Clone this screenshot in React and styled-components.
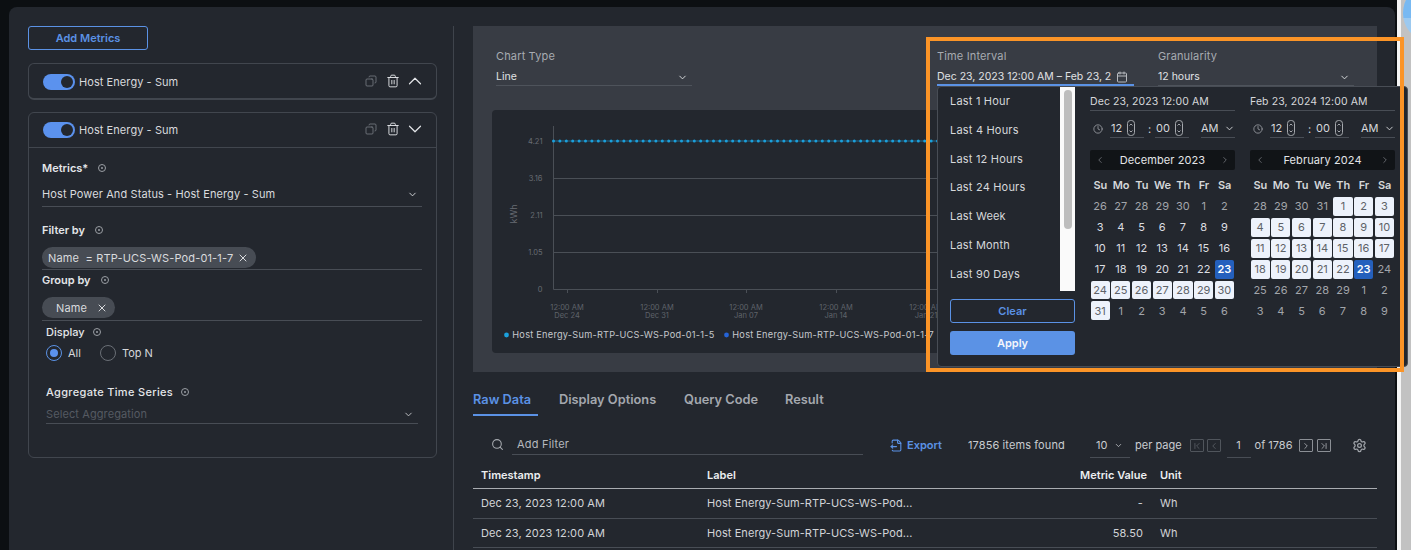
import React from 'react';
import styled, { createGlobalStyle } from 'styled-components';
import { ChevronUp, ChevronDown, ChevronLeft, ChevronRight, ChevronFirst, ChevronLast, Calendar, Clock, Search, X, Settings, FileOutput, Trash2, Copy } from 'lucide-react';

const Global = createGlobalStyle`
  html, body { margin: 0; padding: 0; height: 550px; overflow: hidden; background: #0c0f12; }
  * { box-sizing: border-box; }
  body { font-family: Inter, "Liberation Sans", sans-serif; font-size: 11px; color: #e3e5e8; }
`;

const Page = styled.div`position: relative; width: 1411px; height: 550px; display: flex; overflow: hidden; padding: 7px 0 0 9px;`;
const Card = styled.div`width: 1386px; height: 543px; background: #23272e; border-radius: 8px 8px 0 0; display: flex;`;
const ScrollRail = styled.div`width: 14px; margin-left: 2px; margin-top: -7px; background: #c2c2c2; border-left: 4px solid #f4f4f4;`;
const Bubble = styled.div`position: absolute; left: 1403px; top: -12px; width: 40px; height: 50px; border-radius: 50%; background: linear-gradient(#78b9f2 60%, #9cc9ef 60%);`;

const Left = styled.aside`width: 445px; flex: none; margin-top: 19px; padding: 0 16px 0 19px; border-right: 1px solid #3f444c;`;
const AddButton = styled.button`display: block; width: 120px; height: 24px; background: transparent; border: 1px solid #5b92e5; border-radius: 3px; color: #5b92e5; font: 600 11px Inter, sans-serif;`;
const Panel = styled.section`margin-top: ${p => p.$gap}px; border: 1px solid #41464e; border-radius: 6px; ${p => p.$collapsed && 'border-bottom-width: 2px; height: 37px;'} ${p => p.$tall && 'height: 346px;'}`;
const PanelHead = styled.div`height: ${p => p.$h}px; display: flex; align-items: center; padding: 0 10px 0 14px; ${p => p.$line && 'border-bottom: 1px solid #41464e;'}`;
const Toggle = styled.span`width: 32px; height: 16px; border-radius: 8px; background: #5b92ee; flex: none; display: flex; justify-content: flex-end; align-items: center; padding-right: 2px; &::after { content: ''; width: 12px; height: 12px; border-radius: 50%; background: #23272e; }`;
const PanelTitle = styled.span`margin-left: 4px; font-size: 11px; letter-spacing: .07px; color: #d8dadd; flex: 1;`;
const HeadIcons = styled.span`display: flex; align-items: center; margin-top: -2px;`;
const CopyGlyph = styled(Copy)`color: #7e838b; transform: scaleX(-1);`;
const TrashGlyph = styled(Trash2)`color: #e3e5e8; margin-left: 9px;`;
const ChevGlyph = styled.span`display: flex; margin-left: 4px; color: #e3e5e8;`;
const PanelBody = styled.div`padding: 13px 14px 0 13px;`;
const FieldLabel = styled.div`display: flex; align-items: center; gap: ${p => p.$gap || 10}px; font-weight: ${p => p.$light ? 500 : 600}; font-size: 11px; line-height: 14px; letter-spacing: ${p => p.$ls || 0}px; color: #e4e6e9;`;
const InfoDot = styled.span`width: 8px; height: 8px; border-radius: 50%; border: 1px solid #9a9ea4; display: grid; place-items: center; &::after { content: ''; width: 2px; height: 2px; border-radius: 50%; background: #9a9ea4; }`;
const SelectRow = styled.div`height: ${p => p.$h}px; margin-top: ${p => p.$mt}px; display: flex; align-items: center; justify-content: space-between; border-bottom: 1px solid #484d55; padding-right: 4px; color: #d9dbde; letter-spacing: .1px; font-size: 11px; ${p => p.$muted && 'color: #555a62; svg { color: #c5c7ca; }'}`;
const PillRow = styled.div`height: ${p => p.$h}px; margin-top: 10px; border-bottom: 1px solid #484d55; display: flex; align-items: flex-start;`;
const Pill = styled.span`height: 21px; border-radius: 11px; background: #474c54; display: inline-flex; align-items: center; gap: ${p => p.$gap}px; padding: 0 7px 0 ${p => p.$pl}px; color: #d9dbde; font-size: 11px; letter-spacing: .15px; white-space: pre;`;
const Section = styled.div`margin-top: ${p => p.$mt}px; padding: ${p => p.$inset ? '0 4px' : '0'};`;
const RadioRow = styled.div`display: flex; align-items: center; margin-top: 6px; height: 16px; font-size: 11px; color: #d6d8db;`;
const Radio = styled.span`width: 16px; height: 16px; border-radius: 50%; border: 1px solid ${p => p.$on ? '#5b92e5' : '#6a6f76'}; display: grid; place-items: center; margin-right: 6px; ${p => p.$on && '&::after { content: ""; width: 8px; height: 8px; border-radius: 50%; background: #5b92ee; }'}`;
const RadioText = styled.span`margin-right: ${p => p.$mr}px;`;

const Right = styled.main`flex: 1; padding: 19px 18px 0 19px; min-width: 0;`;
const ChartPanel = styled.section`height: 346px; background: #383c44; padding: 23px 0 0 19px;`;
const Controls = styled.div`display: flex; height: 61px;`;
const Control = styled.div`width: ${p => p.$w}px; margin-left: ${p => p.$ml || 0}px; flex: none; color: #a7abb1; line-height: 14px; letter-spacing: .15px;`;
const ControlValue = styled.div`height: 19px; margin-top: 4px; padding-top: 2px; display: flex; align-items: center; justify-content: space-between; padding-right: ${p => p.$active ? 6 : 4}px; border-bottom: ${p => p.$active ? '2px solid #5b92e5' : '1px solid #4e535b'}; color: #e0e2e5; font-size: 10.5px; letter-spacing: 0; white-space: nowrap;`;
const CalendarGlyph = styled(Calendar)`flex: none; color: #b7babf;`;
const ChartCard = styled.div`width: 877px; height: 243px; border-radius: 4px; background: #23272e; overflow: hidden;`;
const Tabs = styled.nav`display: flex; height: 37px; gap: 21px; margin-top: 7px;`;
const Tab = styled.span`padding: 13px 0 0 0; width: ${p => p.$w}px; font-size: 12.8px; font-weight: 600; white-space: nowrap; color: ${p => p.$on ? '#5b92e5' : '#a4a8ae'}; ${p => p.$on && 'border-bottom: 2px solid #5b92e5;'}`;
const Toolbar = styled.div`height: 45px; display: flex; align-items: flex-start; padding-top: 19px; color: #c9ccd0;`;
const SearchGlyph = styled(Search)`margin: 3px 0 0 18px; color: #a5a9ae; flex: none;`;
const SearchBox = styled.div`width: 351px; margin-left: 8px; height: 20px; border-bottom: 1px solid #484d55; padding: 2px 0 0 5px; color: #b5b8bd; letter-spacing: .2px;`;
const Export = styled.span`margin-left: 27px; width: 78px; display: flex; align-items: center; gap: 4px; color: #5b92e5; font-weight: 600; height: 20px;`;
const Found = styled.span`width: 122px; line-height: 20px; letter-spacing: .1px;`;
const PerPage = styled.span`width: 40px; height: 28px; padding: 3px 0 0 6px; margin-top: -5px; border-bottom: 1px solid #484d55; display: flex; align-items: center; gap: 7px;`;
const PagerText = styled.span`line-height: 20px; margin-left: ${p => p.$ml}px;`;
const PageBtn = styled.span`width: 14px; height: 13px; margin-left: ${p => p.$ml}px; margin-top: 4px; border: 1.5px solid ${p => p.$dim ? '#50555c' : '#8b8f95'}; border-radius: 1px; display: grid; place-items: center; color: ${p => p.$dim ? '#5a5f66' : '#a9adb2'};`;
const PageInput = styled.span`width: 24px; height: 28px; margin: -5px 0 0 6px; padding-top: 3px; border-bottom: 1px solid #484d55; display: grid; place-items: center;`;
const Gear = styled.span`margin-left: 21px; margin-top: 3px; color: #a0a4aa;`;
const Table = styled.div`color: #d2d4d8; letter-spacing: .08px;`;
const Row = styled.div`display: grid; grid-template-columns: 226px 260px 176px 1fr; align-items: center; padding-left: 8px; height: ${p => p.$head ? 28 : 29.5}px; border-bottom: 1px solid ${p => p.$head ? '#a9acb1' : '#484d55'}; ${p => p.$head && 'font-weight: 600; color: #eceef0; letter-spacing: 0;'}`;
const NumCell = styled.span`display: block; text-align: right; margin-right: ${p => p.$head ? -4 : 0}px;`;
const UnitCell = styled.span`padding-left: 17px;`;

const Highlight = styled.div`position: absolute; left: 926px; top: 37px; width: 478px; height: 335px; border: 4px solid #fb9427; pointer-events: none; z-index: 5;`;
const Popover = styled.div`position: absolute; left: 937px; top: 86px; width: 471px; height: 281px; background: #23272e; border: 1px solid #484d55; border-radius: 4px; display: flex; z-index: 3;`;
const PresetCol = styled.div`width: 137px; flex: none; display: flex; flex-direction: column;`;
const PresetTop = styled.div`height: 204px; display: flex;`;
const PresetList = styled.div`width: 122px; padding: 0 0 0 12px; color: #d6d8db; letter-spacing: .2px;`;
const Preset = styled.div`height: 28.8px; line-height: 29px;`;
const PresetScroll = styled.div`width: 15px; background: #fafafa; display: flex; justify-content: center; padding-top: 3px;`;
const Thumb = styled.div`width: 8px; height: 139px; border-radius: 4px; background: #bdbdbd;`;
const Ghost = styled.button`display: block; margin: 8px 0 0 12px; width: 125px; height: 24px; border: 1px solid #5b92e5; border-radius: 3px; background: transparent; color: #5b92e5; font: 600 11px Inter, sans-serif;`;
const Primary = styled.button`display: block; margin: 8px 0 0 12px; width: 125px; height: 24px; border: 0; border-radius: 3px; background: #5b92e5; color: #f3f6fb; font: 600 11px Inter, sans-serif;`;
const CalCol = styled.div`width: 145px; flex: none; margin-left: ${p => p.$ml}px;`;
const DateField = styled.div`height: 24px; padding-top: 8px; line-height: 14px; border-bottom: 1px solid #484d55; color: #d6d8db; font-size: 10.5px; letter-spacing: .1px; white-space: nowrap;`;
const TimeRow = styled.div`height: 19px; margin-top: 8px; display: flex; align-items: center; color: #d6d8db;`;
const TimeClock = styled.span`width: 20px; padding-left: 3px; color: #9a9ea4; display: flex;`;
const TimeBox = styled.span`width: 34px; height: 19px; border-bottom: 1px solid #484d55; display: flex; align-items: center; gap: 5px; padding-left: 1px;`;
const Colon = styled.span`width: 11px; text-align: center;`;
const AmPm = styled.span`margin-left: 12px; width: 34px; height: 19px; border-bottom: 1px solid #484d55; display: flex; align-items: center; justify-content: space-between;`;
const MonthBar = styled.div`height: 20px; margin-top: 12px; border-radius: 2px; background: #111417; display: flex; align-items: center; justify-content: space-between; padding: 0 5px; color: #e3e5e8; letter-spacing: .1px; svg { color: #70747a; }`;
const DayGrid = styled.div`display: grid; grid-template-columns: repeat(7, 1fr); grid-template-rows: 22px repeat(6, 20.9px); margin-top: 4px;`;
const Dow = styled.span`display: grid; place-items: center; font-weight: 600; color: #d5d7da;`;
const Day = styled.span`display: grid; place-items: center; margin: 1px 1px 1px 0.5px; border-radius: 2px; background: ${p => p.$v === 'sel' ? '#2460bd' : p.$v === 'range' ? '#edf2fb' : 'transparent'}; color: ${p => p.$v === 'sel' ? '#fff' : p.$v === 'range' ? '#5e6268' : p.$v === 'out' ? '#a2a5aa' : '#dcdee1'}; font-weight: ${p => p.$v === 'sel' ? 600 : 400};`;

const range = (a, b) => Array.from({ length: b - a + 1 }, (_, i) => a + i);
const dec = [
  ...[26,27,28,29,30].map(n => [n,'out']), [1,'out'], [2,'out'],
  ...range(3,22).map(n => [n,'cur']), [23,'sel'],
  ...range(24,31).map(n => [n,'range']),
  ...range(1,6).map(n => [n,'out']),
];
const feb = [
  ...[28,29,30,31].map(n => [n,'out']),
  ...range(1,22).map(n => [n,'range']), [23,'sel'],
  [24,'out'], ...[25,26,27,28,29].map(n => [n,'out']), [1,'out'], [2,'out'],
  ...range(3,9).map(n => [n,'out']),
];

const StepperSvg = styled.svg`flex: none;`;
const Stepper = () => (
  <StepperSvg width="8" height="16" viewBox="0 0 8 16" fill="none" stroke="#a5a8ad" strokeWidth="1">
    <rect x=".5" y=".5" width="7" height="15" rx="3" />
    <path d="M2.5 5.5 4 4l1.5 1.5M2.5 10.5 4 12l1.5-1.5" />
  </StepperSvg>
);

function RangeCalendar({ ml, start, month, days }) {
  return (
    <CalCol $ml={ml}>
      <DateField>{start}</DateField>
      <TimeRow>
        <TimeClock><Clock size={10} /></TimeClock>
        <TimeBox>12<Stepper /></TimeBox>
        <Colon>:</Colon>
        <TimeBox>00<Stepper /></TimeBox>
        <AmPm>AM <ChevronDown size={11} /></AmPm>
      </TimeRow>
      <MonthBar><ChevronLeft size={10} />{month}<ChevronRight size={10} /></MonthBar>
      <DayGrid>
        {['Su','Mo','Tu','We','Th','Fr','Sa'].map(d => <Dow key={d}>{d}</Dow>)}
        {days.map(([n, v], i) => <Day key={i} $v={v}>{n}</Day>)}
      </DayGrid>
    </CalCol>
  );
}

function PanelHeader({ open, line, h }) {
  const Chev = open ? ChevronDown : ChevronUp;
  return (
    <PanelHead $line={line} $h={h}>
      <Toggle />
      <PanelTitle>Host Energy - Sum</PanelTitle>
      <HeadIcons>
        <CopyGlyph size={12} strokeWidth={1.5} />
        <TrashGlyph size={14} strokeWidth={1.6} />
        <ChevGlyph><Chev size={22} strokeWidth={1.3} /></ChevGlyph>
      </HeadIcons>
    </PanelHead>
  );
}

function ChartDrawing() {
  const ticks = [['Dec 24', 75], ['Dec 31', 165], ['Jan 07', 254], ['Jan 14', 344], ['Jan 21', 434]];
  return (
    <svg width="877" height="243" viewBox="0 0 877 243" fontFamily="Inter, sans-serif">
      <path d="M61.5 16V179.5H877" fill="none" stroke="#4a4f56" />
      {[68, 105, 142].map(y => <path key={y} d={`M61 ${y + 0.5}H877`} stroke="#4a4f56" />)}
      {ticks.map(([d, x]) => <path key={d} d={`M${x + .5} 179v4`} stroke="#4a4f56" />)}
      <path d="M61 31H450" stroke="#1ba0dc" strokeWidth=".6" />
      {range(0, 61).map(i => <circle key={i} cx={61.5 + i * 6.4} cy="31" r="1.5" fill="#1ba0dc" />)}
      {[['4.21', 34], ['3.16', 71], ['2.11', 108], ['1.05', 145], ['0', 182]].map(([t, y]) => (
        <text key={t} x="50.5" y={y} textAnchor="end" fontSize="7.5" fill="#686c73">{t}</text>
      ))}
      <text fontSize="9" fill="#686c73" transform="translate(25 104) rotate(-90)" textAnchor="middle">kWh</text>
      {ticks.map(([d, x]) => (
        <g key={d} fontSize="7.5" fill="#5f636a" textAnchor="middle">
          <text x={x} y="200">12:00 AM</text>
          <text x={x} y="208">{d}</text>
        </g>
      ))}
      <circle cx="14.5" cy="225" r="2.4" fill="#1ba0dc" />
      <text x="20.3" y="228" fontSize="9.2" letterSpacing=".25" fill="#c6c9cd">Host Energy-Sum-RTP-UCS-WS-Pod-01-1-5</text>
      <circle cx="234.5" cy="225" r="2.4" fill="#2563d6" />
      <text x="240.3" y="228" fontSize="9.2" letterSpacing=".25" fill="#c6c9cd">Host Energy-Sum-RTP-UCS-WS-Pod-01-1-7</text>
    </svg>
  );
}

export default function App() {
  return (
    <Page>
      <Global />
      <Card>
        <Left>
          <AddButton>Add Metrics</AddButton>
          <Panel $gap={13} $collapsed><PanelHeader h={35} /></Panel>
          <Panel $gap={12} $tall>
            <PanelHeader open line h={35} />
            <PanelBody>
              <FieldLabel>Metrics* <InfoDot /></FieldLabel>
              <SelectRow $h={25} $mt={7}>Host Power And Status - Host Energy - Sum <ChevronDown size={11} /></SelectRow>
              <Section $mt={16}><FieldLabel>Filter by <InfoDot /></FieldLabel></Section>
              <PillRow $h={23}><Pill $pl={6} $gap={0}>{'Name  = RTP-UCS-WS-Pod-01-1-7'} <X size={12} /></Pill></PillRow>
              <Section $mt={3}><FieldLabel>Group by <InfoDot /></FieldLabel></Section>
              <PillRow $h={24}><Pill $pl={14} $gap={6}>Name <X size={12} /></Pill></PillRow>
              <Section $mt={4} $inset>
                <FieldLabel $light $gap={8}>Display <InfoDot /></FieldLabel>
                <RadioRow>
                  <Radio $on /><RadioText $mr={19}>All</RadioText>
                  <Radio /><RadioText $mr={0}>Top N</RadioText>
                </RadioRow>
              </Section>
              <Section $mt={24} $inset>
                <FieldLabel $light $gap={8} $ls={.33}>Aggregate Time Series <InfoDot /></FieldLabel>
                <SelectRow $muted $h={19} $mt={6}>Select Aggregation <ChevronDown size={11} /></SelectRow>
              </Section>
            </PanelBody>
          </Panel>
        </Left>
        <Right>
          <ChartPanel>
            <Controls>
              <Control $w={196} $ml={4}>Chart Type<ControlValue>Line <ChevronDown size={11} /></ControlValue></Control>
              <Control $w={197} $ml={245}>Time Interval
                <ControlValue $active>Dec 23, 2023 12:00 AM – Feb 23, 2<CalendarGlyph size={12} /></ControlValue>
              </Control>
              <Control $w={196} $ml={24}>Granularity<ControlValue>12 hours <ChevronDown size={11} /></ControlValue></Control>
            </Controls>
            <ChartCard><ChartDrawing /></ChartCard>
          </ChartPanel>
          <Tabs>
            <Tab $on $w={65}>Raw Data</Tab>
            <Tab $w={104}>Display Options</Tab>
            <Tab $w={80}>Query Code</Tab>
            <Tab $w={50}>Result</Tab>
          </Tabs>
          <Toolbar>
            <SearchGlyph size={13} />
            <SearchBox>Add Filter</SearchBox>
            <Export><FileOutput size={13} /> Export</Export>
            <Found>17856 items found</Found>
            <PerPage>10 <ChevronDown size={9} /></PerPage>
            <PagerText $ml={5}>per page</PagerText>
            <PageBtn $dim $ml={8}><ChevronFirst size={10} /></PageBtn>
            <PageBtn $dim $ml={3}><ChevronLeft size={10} /></PageBtn>
            <PageInput>1</PageInput>
            <PagerText $ml={4}>of 1786</PagerText>
            <PageBtn $ml={6}><ChevronRight size={10} /></PageBtn>
            <PageBtn $ml={4}><ChevronLast size={10} /></PageBtn>
            <Gear><Settings size={15} /></Gear>
          </Toolbar>
          <Table>
            <Row $head><span>Timestamp</span><span>Label</span><NumCell $head>Metric Value</NumCell><UnitCell>Unit</UnitCell></Row>
            <Row><span>Dec 23, 2023 12:00 AM</span><span>Host Energy-Sum-RTP-UCS-WS-Pod...</span><NumCell>-</NumCell><UnitCell>Wh</UnitCell></Row>
            <Row><span>Dec 23, 2023 12:00 AM</span><span>Host Energy-Sum-RTP-UCS-WS-Pod...</span><NumCell>58.50</NumCell><UnitCell>Wh</UnitCell></Row>
          </Table>
        </Right>
      </Card>
      <ScrollRail />
      <Bubble />
      <Popover>
        <PresetCol>
          <PresetTop>
            <PresetList>
              {['Last 1 Hour','Last 4 Hours','Last 12 Hours','Last 24 Hours','Last Week','Last Month','Last 90 Days'].map(t => <Preset key={t}>{t}</Preset>)}
            </PresetList>
            <PresetScroll><Thumb /></PresetScroll>
          </PresetTop>
          <Ghost>Clear</Ghost>
          <Primary>Apply</Primary>
        </PresetCol>
        <RangeCalendar ml={15} start="Dec 23, 2023 12:00 AM" month="December 2023" days={dec} />
        <RangeCalendar ml={15} start="Feb 23, 2024 12:00 AM" month="February 2024" days={feb} />
      </Popover>
      <Highlight />
    </Page>
  );
}
